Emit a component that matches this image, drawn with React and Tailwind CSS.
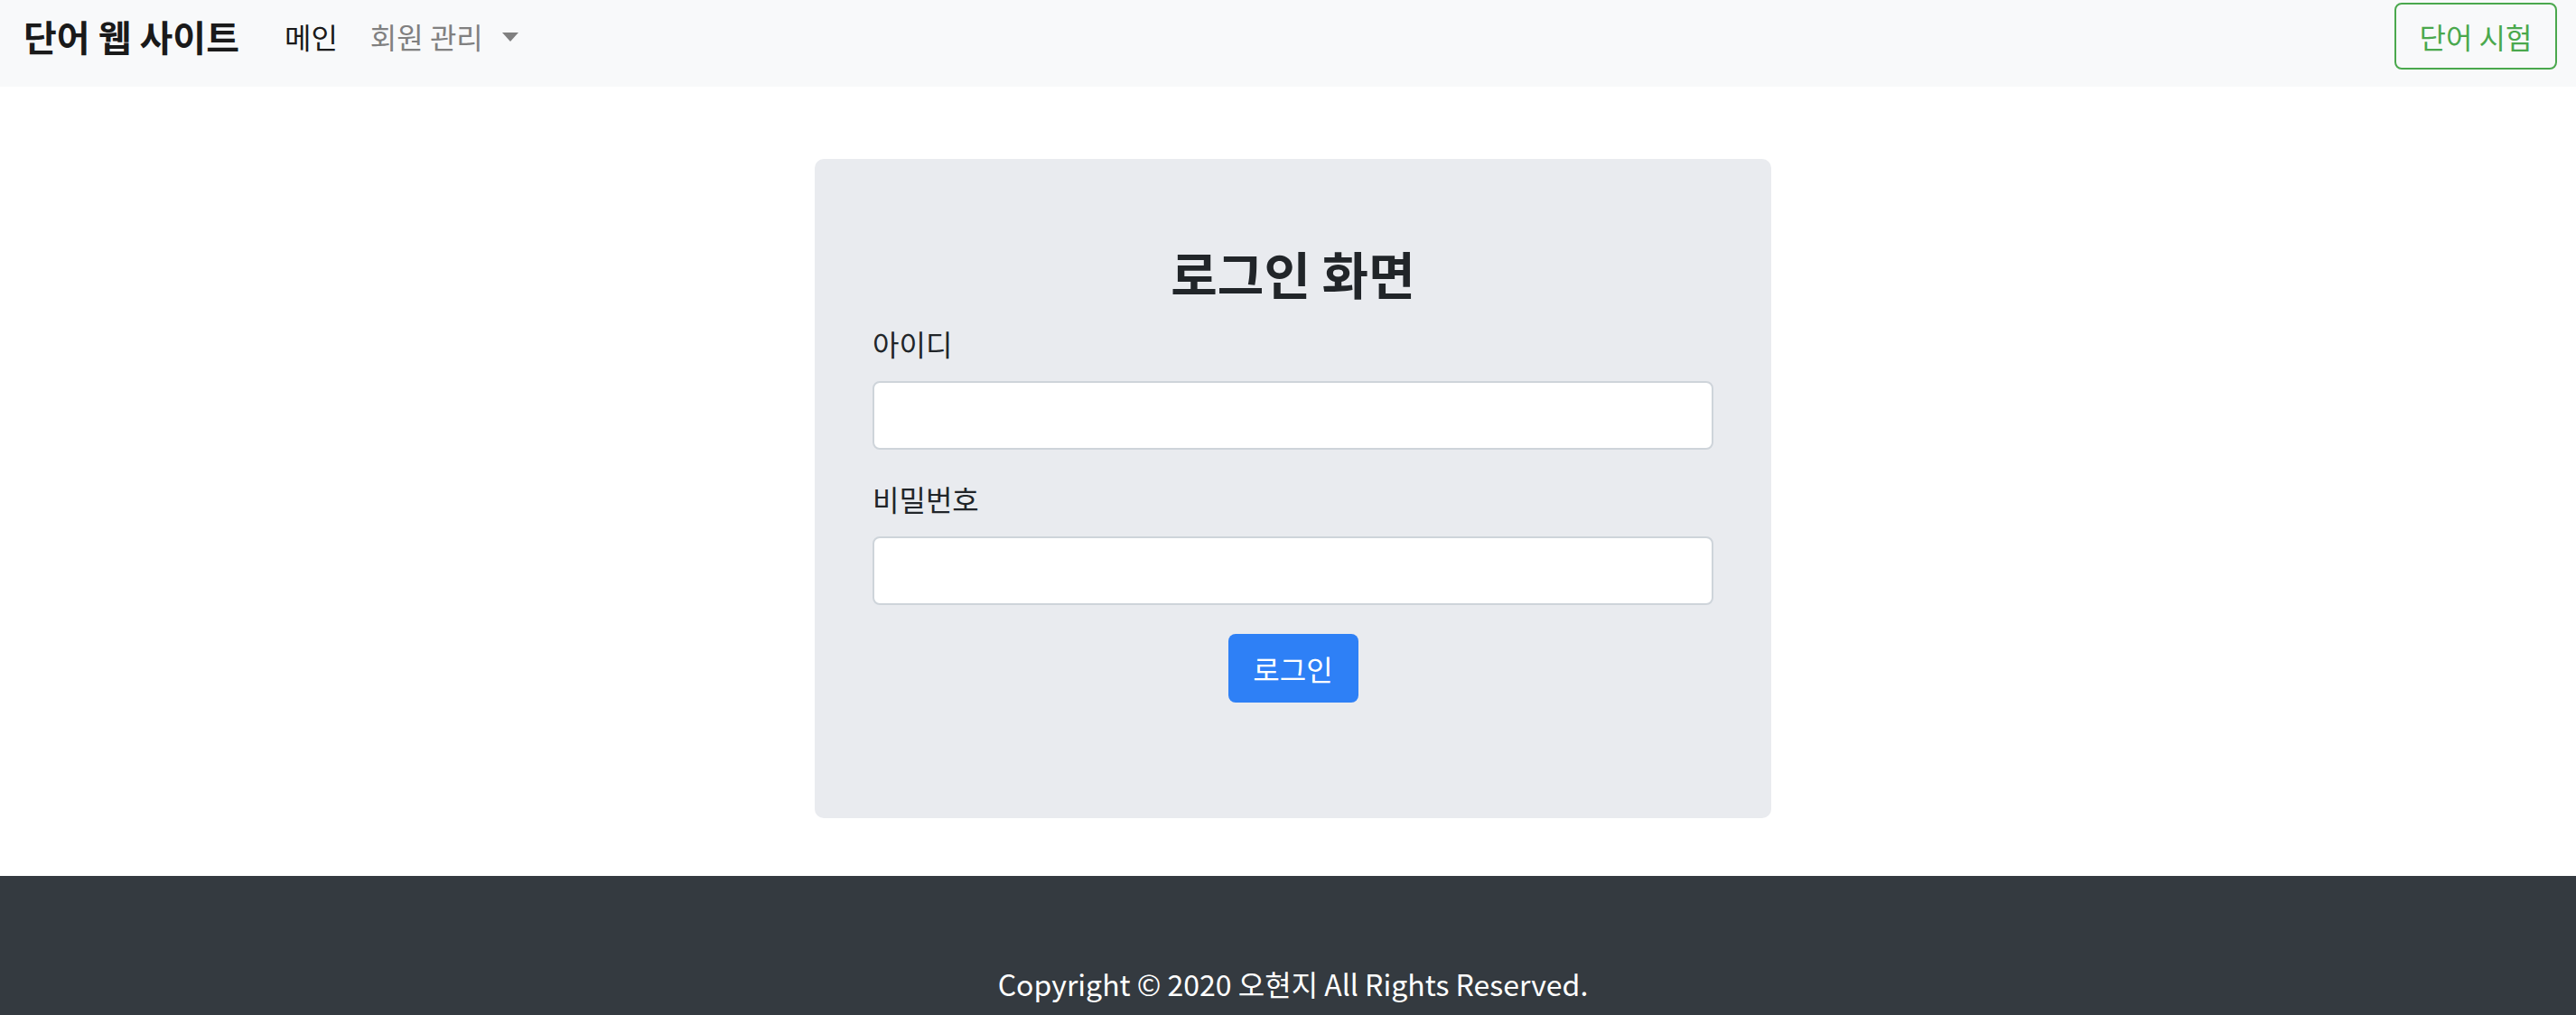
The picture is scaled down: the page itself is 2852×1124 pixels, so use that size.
const font = { fontFamily: '"Noto Sans CJK KR", "Noto Sans", sans-serif' };

const Navbar = () => {
  return (
    <nav className="flex items-start justify-between h-[96px] pt-[3px] pl-[26px] pr-[21px] bg-[#f8f9fa]">
      <div className="flex items-center h-[74px]">
        <span className="text-[40px] font-bold leading-none text-[#1a1a1a]">단어 웹 사이트</span>
        <span className="ml-[50px] text-[32px] leading-none text-[#1a1a1a]">메인</span>
        <span className="ml-[36px] text-[32px] leading-none text-[#808080]">회원 관리</span>
        <span className="ml-[21px] mt-[2px] w-0 h-0 border-l-[9px] border-r-[9px] border-t-[10px] border-l-transparent border-r-transparent border-t-[#808080]" />
      </div>
      <button className="h-[74px] w-[180px] rounded-[8px] border-2 border-[#4aa84d] text-[32px] leading-none text-[#4aa84d]">
        단어 시험
      </button>
    </nav>
  );
};

const LoginCard = () => {
  return (
    <div className="flex justify-center pl-[11px] pt-[80px] pb-[64px]">
      <div className="w-[1059px] rounded-[10px] bg-[#e9ebef] px-[64px] pt-[92px] pb-[128px]">
        <h3 className="text-center text-[56px] font-bold leading-[67px] text-[#212529] mb-[23px]">
          로그인 화면
        </h3>
        <div className="flex flex-col mb-[32px]">
          <label className="text-[32px] leading-[44px] text-[#212529] mb-[20px]">아이디</label>
          <input className="h-[76px] rounded-[8px] border-2 border-[#ced4da] bg-white px-[24px] text-[32px] outline-none" />
        </div>
        <div className="flex flex-col mb-[32px]">
          <label className="text-[32px] leading-[44px] text-[#212529] mb-[20px]">비밀번호</label>
          <input
            type="password"
            className="h-[76px] rounded-[8px] border-2 border-[#ced4da] bg-white px-[24px] text-[32px] outline-none"
          />
        </div>
        <div className="flex justify-center">
          <button className="h-[76px] w-[144px] rounded-[8px] bg-[#2e80f6] text-[32px] leading-none text-white">
            로그인
          </button>
        </div>
      </div>
    </div>
  );
};

const Footer = () => {
  return (
    <footer className="bg-[#343a40] pt-[96px] pb-[96px]">
      <p className="pl-[11px] text-center text-[32px] leading-[46px] text-white">
        Copyright © 2020 오현지 All Rights Reserved.
      </p>
    </footer>
  );
};

const App = () => {
  return (
    <div className="flex flex-col w-full min-h-screen bg-white" style={font}>
      <Navbar />
      <LoginCard />
      <Footer />
    </div>
  );
};

export default App;
